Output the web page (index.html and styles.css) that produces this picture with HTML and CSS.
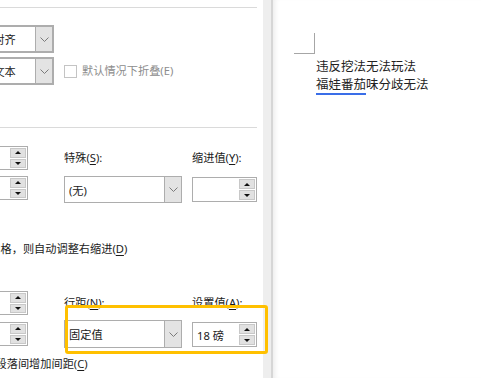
FILE: index.html
```html
<!DOCTYPE html>
<html lang="zh-CN">
<head>
    <meta charset="UTF-8">
    <title>段落</title>
    <link rel="stylesheet" href="styles.css">
</head>
<body>
    <div class="screen">
        <div class="dialog">
            <div class="inner">
                <div class="sep"></div>

                <div class="general">
                    <div class="row">
                        <div class="select wide">
                            <span class="value">两端对齐</span>
                            <span class="arrow"><svg width="9" height="5" viewBox="0 0 9 5"><polyline points="0.5,0.5 4.5,4.5 8.5,0.5" fill="none" stroke="#7a7a7a"/></svg></span>
                        </div>
                    </div>
                    <div class="row">
                        <div class="select wide">
                            <span class="value">正文文本</span>
                            <span class="arrow"><svg width="9" height="5" viewBox="0 0 9 5"><polyline points="0.5,0.5 4.5,4.5 8.5,0.5" fill="none" stroke="#7a7a7a"/></svg></span>
                        </div>
                        <label class="check disabled"><span class="box"></span>默认情况下折叠(E)</label>
                    </div>
                </div>

                <div class="sep sep-indent"></div>

                <div class="grid indent">
                    <div class="col col-left">
                        <div class="spinner left"><span class="value">0 字符</span><span class="spin"><i class="up"></i><i class="down"></i></span></div>
                        <div class="spinner left"><span class="value">0 字符</span><span class="spin"><i class="up"></i><i class="down"></i></span></div>
                    </div>
                    <div class="col">
                        <div class="label">特殊(<u>S</u>):</div>
                        <div class="select field">
                            <span class="value">(无)</span>
                            <span class="arrow"><svg width="9" height="5" viewBox="0 0 9 5"><polyline points="0.5,0.5 4.5,4.5 8.5,0.5" fill="none" stroke="#7a7a7a"/></svg></span>
                        </div>
                    </div>
                    <div class="col">
                        <div class="label">缩进值(<u>Y</u>):</div>
                        <div class="spinner small"><span class="value"></span><span class="spin"><i class="up"></i><i class="down"></i></span></div>
                    </div>
                </div>

                <p class="note">如果定义了文档网格，则自动调整右缩进(<u>D</u>)</p>

                <div class="grid spacing">
                    <div class="col col-left">
                        <div class="spinner left"><span class="value">0 行</span><span class="spin"><i class="up"></i><i class="down"></i></span></div>
                        <div class="spinner left"><span class="value">0 行</span><span class="spin"><i class="up"></i><i class="down"></i></span></div>
                    </div>
                    <div class="col">
                        <div class="label">行距(<u>N</u>):</div>
                        <div class="select field">
                            <span class="value">固定值</span>
                            <span class="arrow"><svg width="9" height="5" viewBox="0 0 9 5"><polyline points="0.5,0.5 4.5,4.5 8.5,0.5" fill="none" stroke="#7a7a7a"/></svg></span>
                        </div>
                    </div>
                    <div class="col">
                        <div class="label">设置值(<u>A</u>):</div>
                        <div class="spinner small"><span class="value">18 磅</span><span class="spin"><i class="up"></i><i class="down"></i></span></div>
                    </div>
                </div>

                <p class="note last">不要在相同样式的段落间增加间距(<u>C</u>)</p>
            </div>
        </div>
        <div class="gutter"></div>
        <div class="page">
            <div class="corner"></div>
            <div class="text">
                <p>违反挖法无法玩法</p>
                <p><span class="grammar">福娃番茄</span>味分歧无法</p>
            </div>
        </div>

        <div class="highlight"></div>
    </div>
</body>
</html>
```

FILE: styles.css
```css
* {
    box-sizing: border-box;
    margin: 0;
    padding: 0;
}

body {
    font-family: "Noto Sans", "Noto Sans CJK SC", sans-serif;
    font-size: 11.2px;
    color: #1a1a1a;
    background: #fff;
    overflow: hidden;
}

.screen {
    position: relative;
    display: flex;
    width: 481px;
    height: 378px;
}

/* dialog, cut off on the left */
.dialog {
    width: 263px;
    height: 100%;
    overflow: hidden;
    background: #fff;
}

.inner {
    width: 357px;
    margin-left: -100px;
}

.sep {
    height: 1px;
    background: #dadada;
    margin-top: 7px;
}

.general {
    margin-top: 17px;
    padding-left: 65px;
}

.general .row {
    display: flex;
    align-items: center;
    margin-bottom: 4px;
}

.select {
    display: flex;
    align-items: stretch;
    background: #fff;
    border: 1px solid #adadad;
}

.select .value {
    flex: 1;
    display: flex;
    align-items: center;
    padding-left: 4px;
    white-space: nowrap;
    overflow: hidden;
}

.select .arrow {
    width: 17px;
    display: flex;
    align-items: center;
    justify-content: center;
    background: #e3e3e3;
    border-left: 1px solid #adadad;
}

.select.wide {
    width: 89px;
    height: 28px;
    border-width: 2px;
}

.check {
    display: flex;
    align-items: center;
    margin-left: 10px;
    line-height: 16px;
}

.check .box {
    width: 13px;
    height: 13px;
    border: 1px solid #c4c4c4;
    margin-right: 5px;
}

.check.disabled {
    color: #8d8d8d;
}

.sep-indent {
    margin-top: 42px;
}

.grid {
    display: grid;
    grid-template-columns: 164px 128px 65px;
}

.col {
    display: flex;
    flex-direction: column;
    align-items: flex-start;
}

.col-left {
    padding-left: 58px;
}

.label {
    line-height: 16px;
}

.label u,
.note u {
    text-decoration-thickness: 1px;
    text-underline-offset: 2px;
}

.spinner {
    display: flex;
    height: 24px;
    border: 1px solid #adadad;
    background: #fff;
}

.spinner .value {
    flex: 1;
    display: flex;
    align-items: center;
    padding-left: 4px;
    white-space: nowrap;
}

.spin {
    width: 17px;
    display: flex;
    flex-direction: column;
    padding: 1px 1px 1px 0;
    gap: 1px;
}

.spin i {
    flex: 1;
    display: flex;
    align-items: center;
    justify-content: center;
    background: #e1e1e1;
    border: 1px solid #c8c8c8;
}

.spin i::after {
    content: "";
    border-left: 3px solid transparent;
    border-right: 3px solid transparent;
}

.spin .up::after {
    border-bottom: 3px solid #111;
}

.spin .down::after {
    border-top: 3px solid #111;
}

.spinner.left {
    width: 70px;
}

.spinner.small {
    width: 65px;
    height: 25px;
}

.indent .col-left .spinner:first-child {
    margin-top: 18px;
}

.indent .col-left .spinner + .spinner {
    margin-top: 6px;
}

.indent .label {
    margin-top: 22px;
}

.indent .select.field {
    margin-top: 10px;
}

.indent .spinner.small {
    margin-top: 11px;
}

.select.field {
    width: 118px;
    height: 27px;
}

.note {
    margin-top: 38px;
    padding-left: 11px;
    line-height: 16px;
    white-space: nowrap;
}

.spacing .col-left .spinner:first-child {
    margin-top: 34px;
}

.spacing .col-left .spinner + .spinner {
    margin-top: 7px;
}

.spacing .label {
    margin-top: 38px;
}

.spacing .select.field {
    margin-top: 9px;
    height: 28px;
}

.spacing .spinner.small {
    margin-top: 11px;
}

.note.last {
    margin-top: 8px;
    padding-left: 0;
    margin-left: 6px;
}

/* space between dialog and document */
.gutter {
    width: 10px;
    height: 100%;
    background: #eeeeee;
    border-right: 2px solid #d6d6d6;
}

.page {
    flex: 1;
    height: 100%;
    background: #fff;
    box-shadow: inset 5px 0 5px -3px rgba(0, 0, 0, 0.08);
    padding: 33px 0 0 21px;
}

.corner {
    width: 21px;
    height: 21px;
    border-right: 1px solid #a6a6a6;
    border-bottom: 1px solid #a6a6a6;
}

.text {
    padding-left: 22px;
    margin-top: 3px;
    font-family: "Noto Sans CJK SC", sans-serif;
    font-size: 12.5px;
    line-height: 18px;
    color: #222;
}

.grammar {
    border-bottom: 2px solid #3a6ee8;
}

/* annotation frame */
.highlight {
    position: absolute;
    left: 65px;
    top: 305px;
    width: 203px;
    height: 49px;
    border: 3px solid #ffc000;
    border-radius: 3px;
}
```
